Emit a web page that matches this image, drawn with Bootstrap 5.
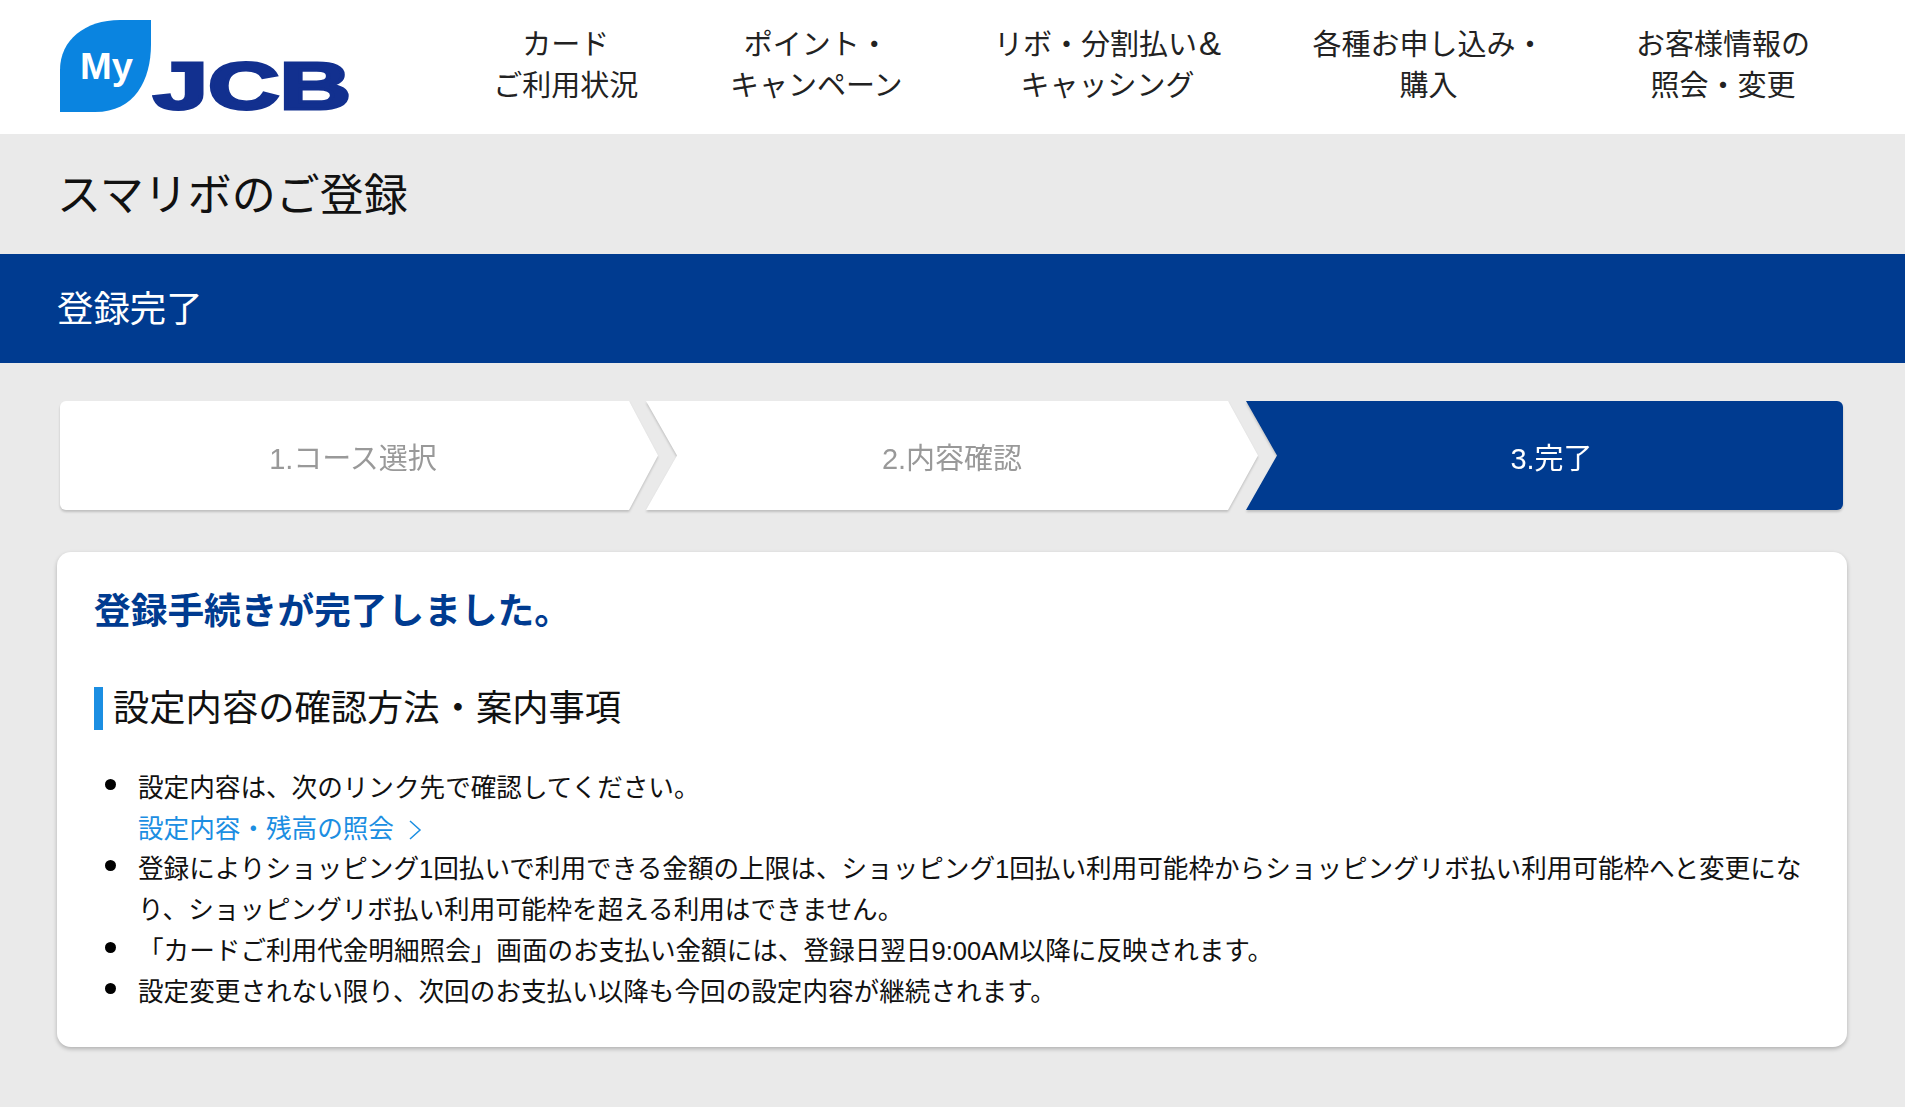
<!DOCTYPE html>
<html lang="ja">
<head>
<meta charset="utf-8">
<title>スマリボのご登録</title>
<link href="https://cdn.jsdelivr.net/npm/bootstrap@5.3.0/dist/css/bootstrap.min.css" rel="stylesheet">
<style>
:root { --jcb-navy:#003b90; --jcb-sky:#1b8ee2; }
body { background:#eaeaea; color:#111; font-family:"Liberation Sans","Noto Sans CJK JP",sans-serif; min-height:1107px; }
.site-head { height:134px; padding:20px 95px 0 60px; }
.logo-box { width:292px; height:114px; flex:none; }
.head-nav { gap:91.5px; font-size:29px; line-height:41px; padding-top:5px; }
.head-nav a { color:#222; text-decoration:none; white-space:nowrap; }
.amp-mark { font-size:33px; margin-left:2px; line-height:0; }
.page-name { height:120px; padding-left:57px; font-size:44px; font-weight:400; margin:0; padding-top:4px; }
.band { height:109px; background:var(--jcb-navy); color:#fff; padding-left:57px; padding-top:2px; font-size:36.4px; font-weight:400; margin:0; }
.flow { padding:38px 62px 0 60px; height:189px; }
.flow-wrap { filter:drop-shadow(0 2px 1px rgba(0,0,0,.18)); margin-left:-12px; }
.flow-wrap:first-child { margin-left:0; width:598px; }
.flow-wrap:nth-child(2) { width:612px; }
.flow-wrap:nth-child(3) { flex:1; }
.flow-step { height:109px; background:#fff; color:#999; font-size:29px; padding-top:8px; }
.flow-wrap:first-child .flow-step { clip-path:polygon(0 0,calc(100% - 29px) 0,100% 50%,calc(100% - 29px) 100%,0 100%); border-radius:6px; padding-right:12px; }
.flow-wrap:nth-child(2) .flow-step { clip-path:polygon(0 0,calc(100% - 30px) 0,100% 50%,calc(100% - 30px) 100%,0 100%,31px 50%); }
.flow-wrap:nth-child(3) .flow-step { clip-path:polygon(0 0,100% 0,100% 100%,0 100%,31px 50%); background:var(--jcb-navy); color:#fff; border-radius:0 6px 6px 0; padding-left:14px; }
.done-card { margin:0 58px 0 57px; height:495px; border-radius:14px; border:0; box-shadow:0 2px 4px rgba(0,0,0,.25); padding:36px 36px 0 37px; }
.done-title { color:var(--jcb-navy); font-size:36.7px; font-weight:700; line-height:48px; margin:0 0 51px; }
.sec-title { border-left:9px solid var(--jcb-sky); padding-left:10px; font-size:36.3px; font-weight:400; line-height:43px; margin:0 0 38px; color:#111; }
.notes { font-size:25.6px; line-height:40.7px; padding-left:44px; margin:0; color:#111; list-style:none; }
.notes li { position:relative; }
.notes li::before { content:""; position:absolute; left:-33px; top:11px; width:11px; height:11px; border-radius:50%; background:#000; }
.notes a { color:var(--jcb-sky); text-decoration:none; }
.chev { width:14px; height:22px; margin-left:14px; vertical-align:-3px; }
</style>
</head>
<body>
<header class="site-head bg-white d-flex">
  <a href="#" class="logo-box d-block">
    <svg width="292" height="114" viewBox="0 0 292 114" role="img" aria-label="My JCB">
      <path d="M91 0 L91 24 C91 60 75 92 35 92 L0 92 L0 50 C0 20 25 0 60 0 Z" fill="#0a84e0"/>
      <text x="20" y="59" fill="#fff" font-family="Liberation Sans" font-weight="700" font-size="36" textLength="53" lengthAdjust="spacingAndGlyphs">My</text>
      <text x="93" y="89" fill="#12308f" stroke="#12308f" stroke-width="3" font-family="Liberation Sans" font-weight="700" font-size="66" textLength="198" lengthAdjust="spacingAndGlyphs">JCB</text>
    </svg>
  </a>
  <nav class="head-nav d-flex ms-auto text-center">
    <a href="#">カード<br>ご利用状況</a>
    <a href="#">ポイント・<br>キャンペーン</a>
    <a href="#">リボ・分割払い<span class="amp-mark">&amp;</span><br>キャッシング</a>
    <a href="#">各種お申し込み・<br>購入</a>
    <a href="#">お客様情報の<br>照会・変更</a>
  </nav>
</header>
<h1 class="page-name d-flex align-items-center">スマリボのご登録</h1>
<h2 class="band d-flex align-items-center">登録完了</h2>
<div class="flow d-flex">
  <div class="flow-wrap"><div class="flow-step d-flex align-items-center justify-content-center">1.コース選択</div></div>
  <div class="flow-wrap"><div class="flow-step d-flex align-items-center justify-content-center">2.内容確認</div></div>
  <div class="flow-wrap"><div class="flow-step d-flex align-items-center justify-content-center">3.完了</div></div>
</div>
<main class="card done-card">
  <h3 class="done-title">登録手続きが完了しました。</h3>
  <h4 class="sec-title">設定内容の確認方法・案内事項</h4>
  <ul class="notes">
    <li>設定内容は、次のリンク先で確認してください。<br><a href="#">設定内容・残高の照会<svg class="chev" viewBox="0 0 14 22" fill="none" stroke="currentColor" stroke-width="1.5"><path d="M2 2 L12 11 L2 20"/></svg></a></li>
    <li>登録によりショッピング1回払いで利用できる金額の上限は、ショッピング1回払い利用可能枠からショッピングリボ払い利用可能枠へと変更になり、ショッピングリボ払い利用可能枠を超える利用はできません。</li>
    <li>「カードご利用代金明細照会」画面のお支払い金額には、登録日翌日9:00AM以降に反映されます。</li>
    <li>設定変更されない限り、次回のお支払い以降も今回の設定内容が継続されます。</li>
  </ul>
</main>
<script src="https://cdn.jsdelivr.net/npm/bootstrap@5.3.0/dist/js/bootstrap.bundle.min.js"></script>
</body>
</html>
